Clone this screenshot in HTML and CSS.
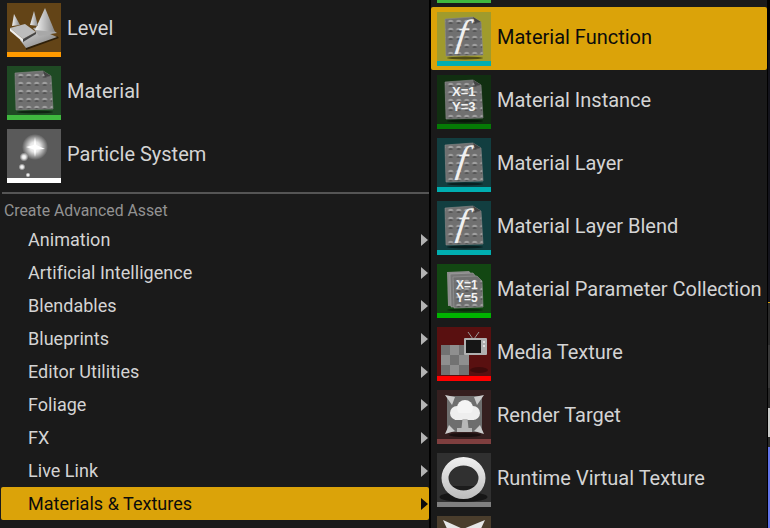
FILE: index.html
```html
<!DOCTYPE html>
<html lang="en">
<head>
  <meta charset="UTF-8" />
  <title>Create Advanced Asset</title>
  <link rel="stylesheet" href="styles.css">
</head>
<body>
  <svg class="defs" width="0" height="0">
    <defs>
      <pattern id="dots" width="8" height="8" patternUnits="userSpaceOnUse" x="1.7" y="6">
        <rect width="8" height="8" fill="#707070"/>
        <ellipse cx="4" cy="3.600" rx="2.600" ry="1.800" fill="#a0a0a0"/>
        <ellipse cx="4" cy="5" rx="2.200" ry="1" fill="#525252"/>
      </pattern>
      <radialGradient id="glow">
        <stop offset="0" stop-color="#fff"/>
        <stop offset="0.4" stop-color="#fff" stop-opacity="0.85"/>
        <stop offset="1" stop-color="#fff" stop-opacity="0"/>
      </radialGradient>
      <linearGradient id="peak" x1="0" x2="1" y1="0" y2="0">
        <stop offset="0" stop-color="#f4f4f4"/>
        <stop offset="1" stop-color="#858585"/>
      </linearGradient>
      <linearGradient id="plate" x1="0" x2="1" y1="0" y2="1">
        <stop offset="0" stop-color="#d8d8d8"/>
        <stop offset="1" stop-color="#7a7a7a"/>
      </linearGradient>
      <linearGradient id="ring" x1="0" x2="0" y1="0" y2="1">
        <stop offset="0" stop-color="#f0f0f0"/>
        <stop offset="1" stop-color="#bcbcbc"/>
      </linearGradient>
      <symbol id="sheet" viewBox="0 0 54 49">
        <ellipse cx="28" cy="46" rx="18" ry="1.500" fill="#000" opacity="0.5"/>
        <path d="M8 7 L36 5 L44 10 L46 43 L9 44 Z" fill="url(#dots)" stroke="#8a8a8a" stroke-width="0.6"/>
        <path d="M36 5 L38 11 L44 10 Z" fill="#444"/>
      </symbol>
    </defs>
  </svg>

  <div class="menu">
    <div class="panel panel-left">
      <div class="asset-row">
        <div class="thumb strip-orange bg-level">
          <svg viewBox="0 0 54 49">
            <path d="M19 47 L52 35 L50 33 L19 44 Z" fill="#2e1f08"/>
            <path d="M13 37 L19 45 L50 34 L34 27 Z" fill="url(#plate)"/>
            <path d="M26 25 L40 23 L50 30 L32 33 Z" fill="#a8a8a8"/>
            <path d="M3 25 L18 21 L29 29 L16 36 Z" fill="#bdbdbd"/>
            <path d="M3 25 L16 36 L16 39 L3 28 Z" fill="#eee"/>
            <path d="M16 36 L29 29 L29 31 L16 39 Z" fill="#444"/>
            <path d="M38 5 L48 29 L28 27 Z" fill="url(#peak)"/>
            <path d="M27 8 L31 23 L23 22 Z" fill="url(#peak)"/>
            <path d="M7 11 L13 22 L5 23 Z" fill="url(#peak)"/>
          </svg>
        </div>
        <span class="asset-name">Level</span>
      </div>
      <div class="asset-row">
        <div class="thumb strip-green bg-material">
          <svg viewBox="0 0 54 49"><use href="#sheet"/></svg>
        </div>
        <span class="asset-name">Material</span>
      </div>
      <div class="asset-row">
        <div class="thumb strip-white bg-particle">
          <svg viewBox="0 0 54 49">
            <circle cx="28" cy="18" r="13" fill="url(#glow)"/>
            <path d="M28 8 L29.200 16 L38 20 L29.200 20.500 L28 28 L26.800 20.500 L19 18 L26.800 16 Z" fill="#fff"/>
            <circle cx="17" cy="28" r="4.500" fill="url(#glow)"/>
            <circle cx="15" cy="38" r="3.500" fill="url(#glow)"/>
            <circle cx="21" cy="46" r="2.500" fill="url(#glow)"/>
          </svg>
        </div>
        <span class="asset-name">Particle System</span>
      </div>

      <div class="divider"></div>
      <div class="section-title">Create Advanced Asset</div>

      <div class="sub-row"><span>Animation</span><i class="arrow"></i></div>
      <div class="sub-row"><span>Artificial Intelligence</span><i class="arrow"></i></div>
      <div class="sub-row"><span>Blendables</span><i class="arrow"></i></div>
      <div class="sub-row"><span>Blueprints</span><i class="arrow"></i></div>
      <div class="sub-row"><span>Editor Utilities</span><i class="arrow"></i></div>
      <div class="sub-row"><span>Foliage</span><i class="arrow"></i></div>
      <div class="sub-row"><span>FX</span><i class="arrow"></i></div>
      <div class="sub-row"><span>Live Link</span><i class="arrow"></i></div>
      <div class="sub-row active"><span>Materials &amp; Textures</span><i class="arrow"></i></div>
    </div>

    <div class="panel panel-right">
      <div class="asset-row">
        <div class="thumb strip-green"></div>
        <span class="asset-name"></span>
      </div>
      <div class="asset-row active">
        <div class="thumb strip-teal bg-function">
          <svg viewBox="0 0 54 49">
            <use href="#sheet"/>
            <text class="fx" x="23" y="34" transform="skewX(-8)">f</text>
          </svg>
        </div>
        <span class="asset-name">Material Function</span>
      </div>
      <div class="asset-row">
        <div class="thumb strip-dkgreen bg-instance">
          <svg viewBox="0 0 54 49">
            <use href="#sheet"/>
            <text class="calc" x="15" y="21">X=1</text>
            <text class="calc" x="15" y="36">Y=3</text>
          </svg>
        </div>
        <span class="asset-name">Material Instance</span>
      </div>
      <div class="asset-row">
        <div class="thumb strip-teal bg-layer">
          <svg viewBox="0 0 54 49">
            <use href="#sheet"/>
            <text class="fx" x="23" y="34" transform="skewX(-8)">f</text>
          </svg>
        </div>
        <span class="asset-name">Material Layer</span>
      </div>
      <div class="asset-row">
        <div class="thumb strip-teal bg-layer">
          <svg viewBox="0 0 54 49">
            <use href="#sheet"/>
            <text class="fx" x="23" y="34" transform="skewX(-8)">f</text>
          </svg>
        </div>
        <span class="asset-name">Material Layer Blend</span>
      </div>
      <div class="asset-row">
        <div class="thumb strip-ltgreen bg-collection">
          <svg viewBox="0 0 54 49">
            <ellipse cx="28" cy="46" rx="18" ry="1.500" fill="#000" opacity="0.4"/>
            <path d="M10 8 L32 7 L36 12 L36 41 L11 42 Z" fill="#8c8c8c"/>
            <path d="M13 10 L36 9 L40 14 L41 42 L14 43 Z" fill="#777" stroke="#a5a5a5" stroke-width="0.6"/>
            <path d="M16 13 L40 12 L45 17 L46 43 L17 44 Z" fill="url(#dots)" stroke="#999" stroke-width="0.6"/>
            <text class="calc small" x="19" y="25">X=1</text>
            <text class="calc small" x="19" y="38">Y=5</text>
          </svg>
        </div>
        <span class="asset-name">Material Parameter Collection</span>
      </div>
      <div class="asset-row">
        <div class="thumb strip-red bg-media">
          <svg viewBox="0 0 54 49">
            <rect x="4" y="18" width="28" height="30" fill="#8f8f8f"/>
            <path d="M4 18h9v10H4zM22 18h10v10H22zM13 28h9v10h-9zM4 38h9v10H4zM22 38h10v10H22z" fill="#727272"/>
            <ellipse cx="42" cy="43" rx="9" ry="3" fill="#000" opacity="0.3"/>
            <path d="M36 12 L31 5 M37 12 L42 5" stroke="#999" stroke-width="1"/>
            <rect x="27" y="11" width="23" height="17" rx="1" fill="#b0b0b0"/>
            <rect x="29" y="13" width="15" height="13" fill="#161616"/>
            <rect x="46" y="14" width="2" height="2" fill="#e0e0e0"/>
            <rect x="46" y="18" width="2" height="2" fill="#e0e0e0"/>
          </svg>
        </div>
        <span class="asset-name">Media Texture</span>
      </div>
      <div class="asset-row">
        <div class="thumb strip-rose bg-target">
          <svg viewBox="0 0 54 49">
            <rect x="10" y="6" width="35" height="36" fill="#6e6e6e"/>
            <ellipse cx="28" cy="45" rx="16" ry="2" fill="#000" opacity="0.5"/>
            <circle cx="20" cy="23" r="7" fill="#eee"/>
            <circle cx="36" cy="23" r="7" fill="#eee"/>
            <circle cx="28" cy="18" r="8" fill="#f4f4f4"/>
            <rect x="18" y="23" width="19" height="7" fill="#eee"/>
            <path d="M25.500 29 H30.500 L31.500 38 H35 V42 H20 V38 H24.500 Z" fill="#b8b8b8"/>
            <path d="M8 5 L18 7 L15 15 Z M47 5 L37 7 L40 15 Z M8 44 L12 35 L18 41 Z M47 44 L43 35 L37 41 Z" fill="#ccc"/>
          </svg>
        </div>
        <span class="asset-name">Render Target</span>
      </div>
      <div class="asset-row">
        <div class="thumb strip-gray bg-virtual">
          <svg viewBox="0 0 54 49">
            <ellipse cx="26.500" cy="44" rx="24" ry="5" fill="#161616"/>
            <path class="ring-hole" d="M12 33 h29 v4 h-29 Z"/>
            <path fill="url(#ring)" fill-rule="evenodd" d="M4.500 25 a22 21 0 1 0 44 0 a22 21 0 1 0 -44 0 Z M11.500 25 a15 12.500 0 1 0 30 0 a15 12.500 0 1 0 -30 0 Z"/>
          </svg>
        </div>
        <span class="asset-name">Runtime Virtual Texture</span>
      </div>
      <div class="asset-row">
        <div class="thumb strip-gray bg-next">
          <svg viewBox="0 0 54 49">
            <path d="M6 4 L26 13 L48 4 L36 30 L18 30 Z" fill="#e6e6e6"/>
          </svg>
        </div>
        <span class="asset-name"></span>
      </div>
    </div>

    <div class="behind">
      <div class="behind-a"></div>
      <div class="behind-b"></div>
      <div class="behind-c"></div>
      <div class="behind-d"></div>
      <div class="behind-e"></div>
      <div class="behind-f"></div>
      <div class="behind-g"></div>
      <div class="behind-h"></div>
      <div class="behind-i"></div>
    </div>
  </div>
</body>
</html>
```

FILE: styles.css
```css
html, body {
  margin: 0;
  height: 528px;
  overflow: hidden;
}
body {
  background: #000;
  font-family: Roboto, "Liberation Sans", sans-serif;
  color: #d4d4d4;
}
.defs {
  display: block;
  height: 0;
}
.menu {
  display: flex;
  height: 528px;
  width: 770px;
  overflow: hidden;
}
.panel {
  background: #1a1a1a;
  overflow: hidden;
  box-sizing: border-box;
}
.panel-left {
  width: 429px;
  padding: 0 0 0 1px;
  flex-shrink: 0;
}
.panel-right {
  width: 336px;
  margin-left: 2px;
  flex-shrink: 0;
}
.panel-right .asset-row:first-child {
  margin-top: -56px;
}
.behind {
  width: 2px;
  margin-left: 1px;
  display: flex;
  flex-direction: column;
}
.behind-a { height: 40px; background: #000; }
.behind-b { height: 262px; background: #14141c; }
.behind-c { height: 1px; background: #dba309; }
.behind-d { height: 42px; background: #2a2a2a; }
.behind-e { height: 43px; background: #3a3a3a; }
.behind-f { height: 20px; background: #2a2a2a; }
.behind-g { height: 29px; background: #cccccc; }
.behind-h { height: 10px; background: #2e2e2e; }
.behind-i { height: 81px; background: #6677ee; }
.asset-row {
  display: flex;
  align-items: flex-start;
  height: 63px;
  padding: 5px 6px 0;
  box-sizing: border-box;
  gap: 6px;
  border-radius: 2px;
}
.panel-left .asset-row {
  padding-top: 3px;
}
.asset-row.active {
  background: #dba309;
}
.asset-row.active .asset-name {
  color: #0c0c0c;
}
.asset-name {
  font-size: 20px;
  line-height: 50px;
  white-space: nowrap;
}
.thumb {
  width: 54px;
  height: 54px;
  flex-shrink: 0;
  box-sizing: border-box;
  border-bottom: 5px solid #888;
}
.thumb svg {
  display: block;
  width: 54px;
  height: 49px;
}
.strip-orange { border-color: #ff9a00; }
.strip-green { border-color: #3fb83f; }
.strip-white { border-color: #fff; }
.strip-teal { border-color: #00aeb0; }
.strip-dkgreen { border-color: #057a05; }
.strip-ltgreen { border-color: #00b400; }
.strip-red { border-color: #ff0000; }
.strip-rose { border-color: #7f3f3f; }
.strip-gray { border-color: #808080; }
.bg-level { background: #634417; }
.bg-material { background: #1f4a24; }
.bg-particle { background: #5a5a5a; }
.bg-function { background: #a09b2c; }
.bg-instance { background: #112f11; }
.bg-layer { background: #123e40; }
.bg-collection { background: #124712; }
.bg-media { background: #591010; }
.bg-target { background: #351f1f; }
.bg-virtual { background: #303030; }
.bg-next { background: #4a3d2c; }
.ring-hole { fill: #1c1c1c; }
.fx {
  font-family: "Liberation Serif", serif;
  font-style: italic;
  font-size: 38px;
  fill: #f0f0f0;
}
.calc {
  font-family: "Liberation Sans", sans-serif;
  font-weight: 700;
  font-size: 13px;
  fill: #f2f2f2;
}
.calc.small {
  font-size: 12px;
}
.divider {
  height: 2px;
  margin: 3px 0 0 1px;
  background: #555;
}
.section-title {
  height: 29px;
  line-height: 33px;
  padding-left: 3px;
  font-size: 15.800px;
  color: #929292;
}
.sub-row {
  display: flex;
  align-items: center;
  justify-content: space-between;
  height: 33px;
  padding: 0 1px 0 27px;
  font-size: 18px;
  letter-spacing: 0.03px;
  border-radius: 2px;
}
.sub-row.active {
  background: #dba309;
  color: #0c0c0c;
}
.arrow {
  width: 0;
  height: 0;
  border-left: 7px solid #b4b4b4;
  border-top: 6px solid transparent;
  border-bottom: 6px solid transparent;
}
.sub-row.active .arrow {
  border-left-color: #0c0c0c;
}
```
